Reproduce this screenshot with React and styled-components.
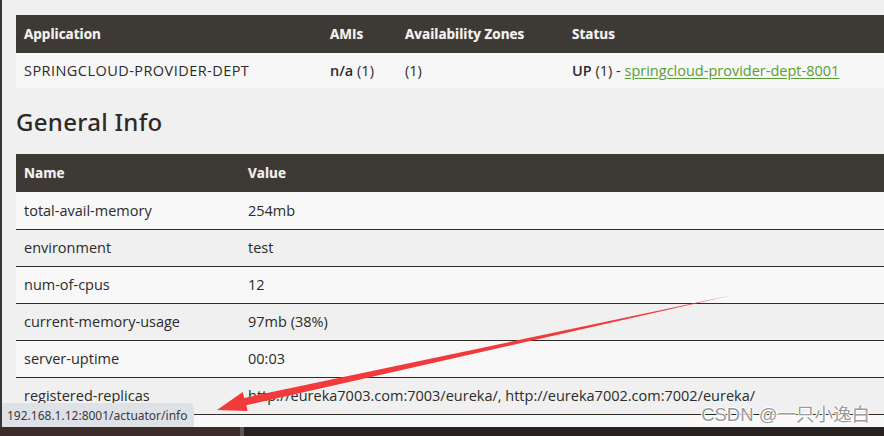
import styled, { createGlobalStyle } from 'styled-components';

const GlobalStyle = createGlobalStyle`
  html, body {
    margin: 0;
    padding: 0;
    background: #2a2321;
    overflow: hidden;
  }
`;

const apps = [
  {
    name: 'SPRINGCLOUD-PROVIDER-DEPT',
    amis: '(1)',
    zones: '(1)',
    link: 'springcloud-provider-dept-8001',
  },
];

const info = [
  ['total-avail-memory', '254mb'],
  ['environment', 'test'],
  ['num-of-cpus', '12'],
  ['current-memory-usage', '97mb (38%)'],
  ['server-uptime', '00:03'],
  ['registered-replicas', 'http://eureka7003.com:7003/eureka/, http://eureka7002.com:7002/eureka/'],
  ['unavailable-replicas', 'http://eureka7003.com:7003/eureka/,http://eureka7002.com:7002/eureka/,'],
];

export default function App() {
  return (
    <Screen>
      <GlobalStyle />
      <Viewport>
        <Page>
          <Table>
            <colgroup>
              <col style={{width: 306}} />
              <col style={{width: 75}} />
              <col style={{width: 167}} />
              <col />
            </colgroup>
            <thead>
              <tr>
                <Th>Application</Th>
                <Th>AMIs</Th>
                <Th>Availability Zones</Th>
                <Th>Status</Th>
              </tr>
            </thead>
            <tbody>
              {apps.map(app => (
                <AppRow key={app.name}>
                  <Td $caps>{app.name}</Td>
                  <Td><b>n/a</b> {app.amis}</Td>
                  <Td>{app.zones}</Td>
                  <Td>
                    <b>UP</b> (1) - <Link href="#">{app.link}</Link>
                  </Td>
                </AppRow>
              ))}
            </tbody>
          </Table>

          <Heading>General Info</Heading>

          <Table>
            <colgroup>
              <col style={{width: 224}} />
              <col />
            </colgroup>
            <thead>
              <tr>
                <Th>Name</Th>
                <Th>Value</Th>
              </tr>
            </thead>
            <tbody>
              {info.map(([k, v], i) => (
                <InfoRow key={k} $odd={i % 2 === 1}>
                  <Td>{k}</Td>
                  <Td>{v}</Td>
                </InfoRow>
              ))}
            </tbody>
          </Table>
        </Page>

        <StatusBubble>192.168.1.12:8001/actuator/info</StatusBubble>

        <Arrow viewBox="0 0 884 436" width="884" height="436">
          <polygon
            fill="#f23a3a"
            points="733,295 246.3,405.2 247.6,411 217,410 242.7,392 244.2,397.9"
          />
        </Arrow>

        <Watermark>CSDN @一只小逸白</Watermark>
      </Viewport>
      <Taskbar>
        <TaskItem $w={240} $bg="#3b2c2a" />
        <TaskItem $w={4} $bg="#5a5452" />
        <TaskItem $w={640} $bg="#27211f" />
      </Taskbar>
    </Screen>
  );
}

const Screen = styled.div`
  width: 884px;
  height: 436px;
  display: flex;
  flex-direction: column;
  overflow: hidden;
`;

const Viewport = styled.div`
  position: relative;
  height: 427px;
  flex: none;
  overflow: hidden;
  background: #f0f0f0;
  border-left: 2px solid #3a3432;
`;

const Page = styled.div`
  width: 940px;
  padding: 15px 0 0 14px;
  font-family: 'Open Sans', 'Noto Sans', sans-serif;
  font-size: 14.5px;
  color: #2b2b2b;
`;

const Table = styled.table`
  width: 100%;
  border-collapse: collapse;
  table-layout: fixed;
`;

const Th = styled.th`
  height: 38px;
  padding: 0 8px;
  background: #3d3935;
  color: #f4f2ee;
  text-align: left;
  font-weight: 700;
  font-size: 13.5px;
  text-shadow: 0 0 1px rgba(255, 255, 255, 0.4);
`;

const Td = styled.td`
  padding: 0 8px;
  white-space: nowrap;
  overflow: hidden;
  letter-spacing: ${p => (p.$caps ? '0.45px' : '0')};
  b {
    font-weight: 600;
  }
`;

const AppRow = styled.tr`
  height: 35px;
  background: #f7f7f7;
`;

const InfoRow = styled.tr`
  height: 37px;
  background: ${p => (p.$odd ? '#f0f0f0' : '#f8f8f8')};
  & + & {
    border-top: 1px solid #2f2b29;
  }
`;

const Link = styled.a`
  color: #5a9e32;
  text-decoration: underline;
  text-underline-offset: 2px;
`;

const Heading = styled.h1`
  margin: 0;
  height: 66px;
  display: flex;
  align-items: center;
  font-family: 'Noto Sans', 'Open Sans', sans-serif;
  font-weight: 500;
  font-size: 24px;
  letter-spacing: 0.3px;
  color: #2d2a28;
`;

const StatusBubble = styled.div`
  position: absolute;
  left: 0;
  bottom: 0;
  height: 24px;
  padding: 0 7px 0 5px;
  display: flex;
  align-items: center;
  background: #dee1e6;
  border-top-right-radius: 5px;
  font-family: 'Noto Sans', 'Open Sans', sans-serif;
  font-size: 12px;
  color: #3a3a3a;
`;

const Arrow = styled.svg`
  position: absolute;
  left: -2px;
  top: 0;
  pointer-events: none;
`;

const Watermark = styled.div`
  position: absolute;
  right: 14px;
  bottom: 1px;
  font-family: 'Liberation Sans', 'Noto Sans CJK SC', sans-serif;
  font-size: 18.5px;
  color: #9a9a9a;
  text-shadow: 1px 0 0 #fff, -1px 0 0 #fff, 0 1px 0 #fff, 0 -1px 0 #fff;
`;

const Taskbar = styled.div`
  height: 9px;
  flex: none;
  display: flex;
`;

const TaskItem = styled.div`
  width: ${p => p.$w}px;
  flex: none;
  background: ${p => p.$bg};
`;
